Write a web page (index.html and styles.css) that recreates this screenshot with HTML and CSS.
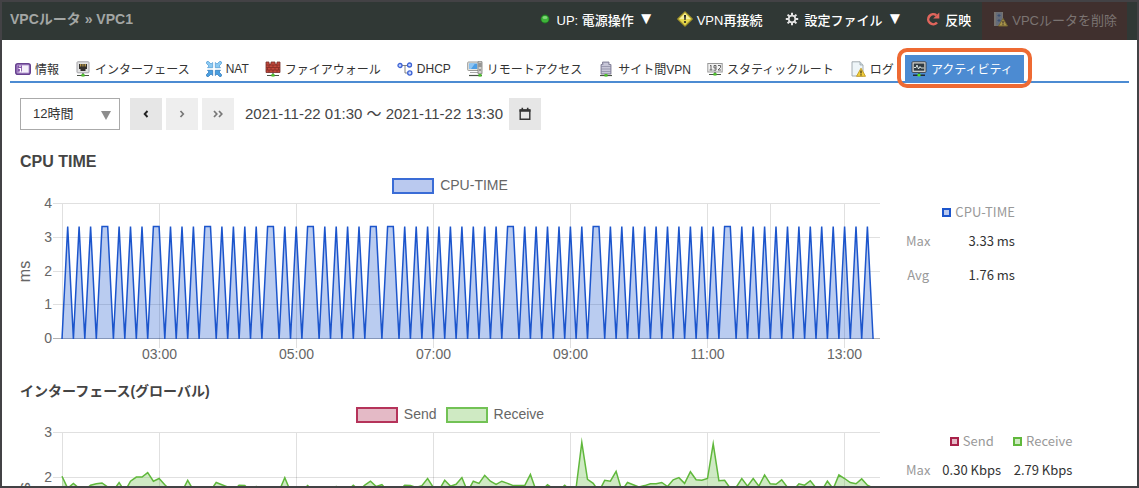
FILE: index.html
```html
<!DOCTYPE html>
<html lang="ja">
<head>
<meta charset="utf-8">
<title>VPCルータ » VPC1</title>
<link rel="stylesheet" href="styles.css">
</head>
<body>
<div class="frame">
  <header class="topbar">
    <h1 class="topbar-title">VPCルータ » VPC1</h1>
    <div class="actions">
      <button class="action" type="button">
        <svg class="icon" viewBox="0 0 16 16"><circle cx="8" cy="8" r="4.4" fill="#1f7a22"/><circle cx="8" cy="8" r="3.6" fill="#3fb33a"/><ellipse cx="8" cy="6.6" rx="2.4" ry="1.5" fill="#7fd678"/></svg>
        <span>UP: 電源操作</span><span class="caret">▼</span>
      </button>
      <button class="action" type="button">
        <svg class="icon" viewBox="0 0 16 16"><path d="M8 .8 15.2 8 8 15.2.8 8Z" fill="#e6d84e" stroke="#a8992b" stroke-width="1.2" stroke-linejoin="round"/><path d="M8 2.3 13.7 8H2.3Z" fill="#f5ef9b"/><path d="M7 4h2l-.4 5H7.400Z" fill="#222"/><circle cx="8" cy="11" r="1.1" fill="#222"/></svg>
        <span>VPN再接続</span>
      </button>
      <button class="action" type="button">
        <svg class="icon" viewBox="0 0 16 16" fill="none" stroke="#e4e4e4"><circle cx="8" cy="8" r="3.300" stroke-width="1.700"/><path d="M8 1.800V4.500M8 11.500V14.200M1.800 8H4.500M11.500 8H14.200M3.600 3.600 5.500 5.500M10.500 10.500 12.400 12.400M3.600 12.400 5.500 10.500M10.500 5.500 12.400 3.600" stroke-width="2"/></svg>
        <span>設定ファイル</span><span class="caret">▼</span>
      </button>
      <button class="action" type="button">
        <svg class="icon" viewBox="0 0 16 16"><path d="M12 11.500A5 5 0 1 1 11.300 4.300" fill="none" stroke="#e0655c" stroke-width="2.600"/><path d="M14.300 1.500V7.600H8.200Z" fill="#e0655c"/></svg>
        <span>反映</span>
      </button>
      <button class="action action-delete" type="button" disabled>
        <svg class="icon" viewBox="0 0 16 16"><path d="M2 1h9v14H2z" fill="#77736f"/><path d="M4 1.500h6v13H4z" fill="#656c78"/><path d="M7 3v3M5.500 4.500h3M7 8v3M5.500 9.500h3" stroke="#3a4e70"/><path d="M11 7.500 15.500 15h-9Z" fill="#a8934a" stroke="#756530"/><path d="M11 10v2.500M11 13.200v1" stroke="#302828"/></svg>
        <span>VPCルータを削除</span>
      </button>
    </div>
  </header>

  <nav class="tabs">
    <a class="tab" href="#info"><svg class="icon" viewBox="0 0 16 16"><rect x=".8" y="2.800" width="14.400" height="10.400" rx="2" fill="#b79bd3" stroke="#67418f" stroke-width="1.600"/><path d="M7 4.500h6.500v7H7z" fill="#f5f0fa"/><path d="M2.500 11.500V4.500H7v7Z" fill="#8455aa"/><path d="M5 4.500v1.500M3.500 7.500H5.500V11M3.500 11h4" stroke="#fff" stroke-width="1.200" fill="none"/></svg><span>情報</span></a>
    <a class="tab" href="#interface"><svg class="icon" viewBox="0 0 16 16"><rect x="2" y=".8" width="12" height="11" rx=".8" fill="#e2e2e2" stroke="#a3a3a8"/><path d="M4 3h8v5h-1.500v2h-5V8H4Z" fill="#33302e"/><path d="M5.500 3v2.500M7.200 3v2.500M8.900 3v2.500M10.500 3v2.500" stroke="#d8b454" stroke-width=".8"/><path d="M2 14.500h12M8 12v2" stroke="#4b5348" stroke-width="1.200"/><rect x="6.500" y="13" width="3" height="2.600" fill="#4ec22d"/></svg><span>インターフェース</span></a>
    <a class="tab" href="#nat"><svg class="icon" viewBox="0 0 16 16"><g fill="#8ccaf2" stroke="#4c98d4" stroke-width=".7"><path id="q" d="M1 .5 2.500 .5 5 3 6.700 1.500V6.700H1.500L3 5 .5 2.500V1Z"/><use href="#q" transform="matrix(-1 0 0 1 16 0)"/></g><g fill="#4a9fe0" stroke="#2a72b8" stroke-width=".7"><path d="M1 15.500H2.500L5 13 6.700 14.500V9.300H1.500L3 11 .5 13.500V15Z"/><path d="M15 15.500H13.500L11 13 9.300 14.500V9.300h5.200L13 11l2.500 2.500V15Z"/></g></svg><span>NAT</span></a>
    <a class="tab" href="#firewall"><svg class="icon" viewBox="0 0 16 16"><path d="M1 1h3v2h2V1h4v2h2V1h3v10.500H1Z" fill="#c4473b" stroke="#75302b" stroke-width=".8"/><path d="M1 4h14M1 6.500h14M1 9h14M4 4v2.500M8 4v2.500M12 4v2.500M2.500 6.500V9M6 6.500V9M10 6.500V9M13.500 6.500V9M4 9v2.500M8 9v2.500M12 9v2.500" stroke="#7c2b25" stroke-width=".7"/><path d="M2 14.500h12M8 12v2" stroke="#4b5348" stroke-width="1.200"/><rect x="6.500" y="13" width="3" height="2.600" fill="#4ec22d"/></svg><span>ファイアウォール</span></a>
    <a class="tab" href="#dhcp"><svg class="icon" viewBox="0 0 16 16"><path d="M4 4.500h8M8 4.500V12h4" fill="none" stroke="#777" stroke-width=".9"/><g fill="#c7d6ff" stroke="#3c62d4" stroke-width="1.300"><circle cx="3" cy="4.500" r="2"/><circle cx="12.500" cy="4" r="2"/><circle cx="12.800" cy="12" r="2.100"/></g></svg><span>DHCP</span></a>
    <a class="tab" href="#remote"><svg class="icon" viewBox="0 0 16 16"><rect x=".7" y="1" width="11.300" height="8.500" rx=".7" fill="#e7e7e2" stroke="#9b9b98"/><rect x="2.300" y="2.500" width="8" height="5.500" fill="#4c9ee5"/><path d="M2.300 2.500H8L4 8H2.300Z" fill="#8ec5f3"/><path d="M3 11h8v1H3z" fill="#aaa"/><path d="M11 .7h4v12h-4z" fill="#d2d2cf" stroke="#797976" stroke-width=".8"/><path d="M11.500 3h3M11.500 5h3M12 9h2" stroke="#5b5b5b"/><path d="M2 14.500h13" stroke="#4b5348" stroke-width="1.200"/><rect x="11.500" y="13" width="3" height="2.600" fill="#4ec22d"/></svg><span>リモートアクセス</span></a>
    <a class="tab" href="#vpn"><svg class="icon" viewBox="0 0 16 16"><path d="M3 13V3.500H4.500V1H11v2.500h2V13Z" fill="#b3b2c7" stroke="#77758e" stroke-width=".8"/><path d="M5 4v8M7 2v10M9 2v10M11 4v8" stroke="#e7e6f1" stroke-width=".8"/><path d="M3 5.500h10M3 8h10M3 10.500h10" stroke="#88869f" stroke-width=".7"/><path d="M2 14.500h12" stroke="#4b5348" stroke-width="1.200"/><rect x="6.500" y="13" width="3" height="2.600" fill="#4ec22d"/></svg><span>サイト間VPN</span></a>
    <a class="tab" href="#route"><svg class="icon" viewBox="0 0 16 16"><rect x=".8" y="2.500" width="14.400" height="8.500" fill="#f2f2f2" stroke="#999"/><path d="M3 5l1-.8V9M2.500 9h3M9 9.200V4.500H7V7h2M6.500 9.200H9M11 4.500h2.500V6.500L11 9h3" fill="none" stroke="#555" stroke-width=".9"/><path d="M2 13.500h12M8 11v2" stroke="#4b5348" stroke-width="1.200"/><rect x="6.500" y="12" width="3" height="2.600" fill="#4ec22d"/></svg><span>スタティックルート</span></a>
    <a class="tab" href="#log"><svg class="icon" viewBox="0 0 16 16"><path d="M2 .8h8L13 4v11H2Z" fill="#eef5f8" stroke="#9aa4a9" stroke-width=".9"/><path d="M10 .8V4h3" fill="#cdd9df" stroke="#9aa4a9" stroke-width=".8"/><path d="M11 7.200 15.500 15.300h-9Z" fill="#f2cf3e" stroke="#c19b25" stroke-width=".9" stroke-linejoin="round"/><path d="M11 9.500v3M11 13.200v1.200" stroke="#392f15" stroke-width="1.200"/></svg><span>ログ</span></a>
    <a class="tab tab-active" href="#activity"><svg class="icon" viewBox="0 0 16 16"><rect x="1" y=".8" width="14" height="10.600" rx=".8" fill="#d8d8d3" stroke="#33383d" stroke-width=".9"/><rect x="2.700" y="2.500" width="10.600" height="7.200" fill="#303b42"/><path d="M3 6.500h2L6 4l1.500 4L9 5.500 10 7h3" fill="none" stroke="#e6f2ee" stroke-width=".9"/><path d="M2 14.300h12M8 12v2" stroke="#222b32" stroke-width="1.400"/><rect x="6.500" y="12.800" width="3" height="2.600" fill="#4ee32d"/></svg><span>アクティビティ</span></a>
  </nav>

  <main class="content">
    <form class="controls">
      <label class="period">
        <select class="period-select" aria-label="期間"><option>12時間</option></select>
      </label>
      <button class="pager" type="button" aria-label="前へ"><svg class="icon" viewBox="0 0 16 16"><path d="M9.500 5 6.700 8l2.800 3" fill="none" stroke="#222" stroke-width="1.900"/></svg></button>
      <button class="pager pager-off" type="button" aria-label="次へ" disabled><svg class="icon" viewBox="0 0 16 16"><path d="M6.500 5 9.300 8l-2.800 3" fill="none" stroke="#777" stroke-width="1.700"/></svg></button>
      <button class="pager pager-off" type="button" aria-label="最新" disabled><svg class="icon" viewBox="0 0 16 16"><path d="M4 5 6.800 8 4 11M9 5l2.800 3L9 11" fill="none" stroke="#777" stroke-width="1.700"/></svg></button>
      <span class="range">2021-11-22 01:30 〜 2021-11-22 13:30</span>
      <button class="pager" type="button" aria-label="日付を選択"><svg class="icon" viewBox="0 0 16 16"><path d="M3.200 4h9.600v9.300H3.200Z" fill="none" stroke="#333" stroke-width="1.400"/><path d="M2.500 3.500h11v2.200h-11zM4.500 1.800h1.600v2H4.500zM9.900 1.800h1.600v2H9.900z" fill="#333"/></svg></button>
    </form>

    <section class="panel">
      <h2 class="panel-title">CPU TIME</h2>
      <div class="panel-body">
        <div class="chart">
          <div class="legend"><span class="legend-item"><i class="legend-box blue"></i>CPU-TIME</span></div>
          <svg class="plot" id="cpu-chart"></svg>
        </div>
        <table class="stats">
          <tr><td></td><th scope="col"><i class="swatch blue"></i>CPU-TIME</th></tr>
          <tr><th scope="row">Max</th><td>3.33 ms</td></tr>
          <tr><th scope="row">Avg</th><td>1.76 ms</td></tr>
        </table>
      </div>
    </section>

    <section class="panel">
      <h2 class="panel-title panel-title-ja">インターフェース(グローバル)</h2>
      <div class="panel-body">
        <div class="chart">
          <div class="legend"><span class="legend-item"><i class="legend-box red"></i>Send</span><span class="legend-item"><i class="legend-box green"></i>Receive</span></div>
          <svg class="plot" id="traffic-chart"></svg>
        </div>
        <table class="stats">
          <tr><td></td><th scope="col"><i class="swatch red"></i>Send</th><th scope="col"><i class="swatch green"></i>Receive</th></tr>
          <tr><th scope="row">Max</th><td>0.30 Kbps</td><td>2.79 Kbps</td></tr>
        </table>
      </div>
    </section>
  </main>
</div>
<script src="charts.js"></script>
</body>
</html>
```

FILE: styles.css
```css
* { box-sizing: border-box; }

body {
  margin: 0;
  font-family: "Liberation Sans", "Noto Sans CJK JP", sans-serif;
  font-size: 13px;
  color: #333;
  background: #fff;
}

button, select { font: inherit; margin: 0; }

.frame {
  height: 100vh;
  overflow: hidden;
  border: 2px solid #434245;
}

.icon { width: 16px; height: 16px; flex: none; display: block; }

/* Header */
.topbar {
  display: flex;
  justify-content: space-between;
  height: 38px;
  padding: 0 10px 0 8px;
  background: #303835;
}
.topbar-title {
  margin: 0;
  font-size: 14px;
  line-height: 34px;
  font-weight: bold;
  color: #a3a6a4;
  white-space: nowrap;
}
.actions { display: flex; white-space: nowrap; }
.action {
  display: flex;
  align-items: center;
  gap: 4px;
  padding: 0 11px 4px;
  border: 0;
  background: none;
  color: #fff;
  font-weight: 500;
}
.caret { font-size: 17px; line-height: 16px; }
.action-delete {
  padding: 0 10px 4px 10px;
  background: #40302e;
  color: #7b7472;
  font-weight: 400;
}

/* Tabs */
.tabs {
  display: flex;
  gap: 6px;
  margin: 15px 8px 0;
  border-bottom: 2px solid #4c8bd2;
  font-size: 12px;
  white-space: nowrap;
}
.tab {
  display: flex;
  align-items: center;
  gap: 4px;
  height: 26px;
  padding: 1px 5px 0;
  color: #333;
  text-decoration: none;
}
.tab-active {
  position: relative;
  padding: 1px 11px 0 6px;
  background: #4c8bd2;
  color: #fff;
}
.tab-active::after {
  content: "";
  position: absolute;
  inset: -7px -8px;
  border: 4px solid #ee6a33;
  border-radius: 10px;
}

/* Period controls */
.content { padding: 15px 10px 0 18px; }
.controls { display: flex; align-items: center; height: 32px; gap: 4px; }
.period { position: relative; width: 100px; margin-right: 6px; }
.period::after {
  content: "";
  position: absolute;
  right: 9px;
  top: 13px;
  border: 5px solid transparent;
  border-top: 9px solid #8d8d8d;
  border-bottom: 0;
  pointer-events: none;
}
.period-select {
  display: block;
  appearance: none;
  width: 100%;
  height: 32px;
  padding: 0 12px 2px;
  border: 1px solid #aaa;
  border-radius: 0;
  background: #fff;
  color: #333;
}
.pager {
  display: grid;
  place-items: center;
  width: 32px;
  height: 32px;
  padding: 0;
  border: 0;
  background: #e6e6e6;
}
.pager-off { background: #eee; }
.range { margin: 0 2px 0 7px; font-size: 15px; line-height: 20px; white-space: nowrap; color: #444; }

/* Chart panels */
.panel-title {
  margin: 0;
  padding-top: 20px;
  font-size: 16px;
  line-height: 24px;
  color: #444;
}
.panel-title-ja { font-size: 14px; }
.panel-body { display: flex; gap: 20px; }
.chart { flex: 1; min-width: 0; padding-top: 4px; }
.legend {
  display: flex;
  justify-content: center;
  gap: 9px;
  height: 16px;
  font-size: 14px;
  line-height: 15px;
  color: #666;
}
.legend-item { display: flex; gap: 6px; }
.legend-box { width: 42px; height: 16px; border: 2px solid; }
.blue { border-color: #3a6cd6; background: #bac9ef; }
.red { border-color: #b5335a; background: #e4bac6; }
.green { border-color: #72c255; background: #cfeac3; }
.plot { display: block; width: 100%; height: 165px; overflow: visible; }
.plot text { font-size: 14px; fill: #666; }
.plot .axis-title { font-size: 16px; }
.plot .grid { stroke: #000; stroke-opacity: 0.12; }
.plot .zero { stroke: #000; stroke-opacity: 0.3; }
.plot .series { stroke-width: 1.5; stroke-miterlimit: 10; fill: none; }
.plot .cpu { stroke: #1c55cc; }
.plot .cpu-area { fill: #1c55cc; fill-opacity: 0.3; }
.plot .receive { stroke: #60b83c; }
.plot .receive-area { fill: #60b83c; fill-opacity: 0.3; }

/* Statistics */
.stats {
  flex: 0 0 227px;
  align-self: flex-start;
  display: block;
  margin-top: 29px;
  border-collapse: collapse;
  font-family: "Noto Sans CJK JP", sans-serif;
  line-height: 18px;
}
.stats th { font-weight: 400; color: #999; white-space: nowrap; }
.stats th, .stats td { padding: 8px 6px; }
.stats tr:first-child th { padding: 0 6px 3px; }
.stats tr:first-child td { padding: 0; }
.stats td { text-align: right; white-space: nowrap; }
.swatch {
  display: inline-block;
  width: 9px;
  height: 9px;
  margin-right: 4px;
  border: 2px solid;
}
.swatch.blue { border-color: #1c55cc; }
.swatch.red { border-color: #a8224a; }
.swatch.green { border-color: #60b83c; }
```

FILE: charts.js
```js
// Samples are taken every five minutes, starting at 01:35.
const SPAN = 143.2;
const LEFT = 42;
const TOP = 10;
const HEIGHT = 135;

// CPU time alternates between 0 and 3.33 ms; a few peaks last two samples.
const wide = new Set([7, 16, 25, 36, 43, 54, 57, 78, 93, 116]);
const cpu = new Array(143).fill(0);
for (let i = 1; i < 142; i += 2) {
  cpu[i] = 3.33;
  if (wide.has(i)) {
    cpu[i + 1] = 3.33;
    i += 1;
  }
}

const receive = [
  2.04, 1.77, 1.88, 1.77, 1.73, 1.84, 1.87, 1.89, 1.80, 1.72, 1.90, 1.70,
  1.93, 2.02, 2.02, 2.12, 1.93, 1.99, 1.85, 1.72, 1.70, 1.70, 1.95, 1.73,
  1.72, 1.70, 1.72, 1.90, 1.85, 1.80, 1.72, 1.84, 1.83, 1.72, 1.81, 1.72,
  1.70, 1.70, 1.71, 2.01, 1.70, 1.70, 1.70, 1.83, 1.72, 1.72, 1.70, 1.72,
  1.81, 1.72, 1.72, 1.84, 1.73, 1.84, 1.93, 1.81, 1.85, 1.72, 1.70, 1.72,
  1.84, 1.83, 1.79, 1.83, 1.99, 1.79, 1.73, 1.95, 1.82, 1.86, 2.01, 1.70,
  1.93, 1.88, 2.06, 1.93, 1.86, 1.93, 1.88, 1.83, 1.83, 1.83, 2.08, 1.72,
  1.72, 1.85, 1.76, 1.72, 1.84, 1.72, 1.78, 2.79, 1.97, 1.88, 1.70, 1.95,
  1.93, 2.15, 1.72, 1.90, 1.85, 1.80, 1.83, 1.87, 1.87, 1.90, 1.81, 1.96,
  2.01, 1.88, 2.14, 1.96, 1.95, 1.99, 2.76, 1.94, 1.95, 1.77, 1.79, 1.99,
  1.82, 1.99, 1.82, 2.07, 1.87, 1.86, 1.96, 1.79, 1.72, 1.87, 1.84, 1.94,
  1.78, 1.72, 1.93, 1.76, 2.07, 1.99, 1.90, 1.87, 1.98, 1.84, 1.78
];

function draw(id, options) {
  const svg = document.getElementById(id);
  const width = svg.getBoundingClientRect().width;
  const x = i => LEFT + (i / SPAN) * (width - LEFT);
  const y = v => TOP + HEIGHT * (1 - v / options.max);
  const crisp = v => Math.floor(v) + 0.5;
  const line = (cls, x1, y1, x2, y2) =>
    `<line class="${cls}" x1="${x1}" y1="${y1}" x2="${x2}" y2="${y2}"/>`;
  const bottom = TOP + HEIGHT;
  let out = "";

  for (let v = 0; v <= options.max; v += 1) {
    const gy = crisp(y(v) - 0.5);
    out += line(v ? "grid" : "zero", LEFT - 9, gy, width, gy);
    out += `<text x="${LEFT - 10}" y="${gy + 4}" text-anchor="end">${v}</text>`;
  }
  out += line("grid", LEFT + 0.5, TOP, LEFT + 0.5, bottom);
  for (let i = 17, hour = 3; hour <= 13; i += 24, hour += 2) {
    const gx = crisp(x(i));
    out += line("grid", gx, TOP, gx, bottom + 9);
    out += `<text x="${gx}" y="${bottom + 20}" text-anchor="middle">${String(hour).padStart(2, "0")}:00</text>`;
  }
  if (options.mark) {
    const gx = crisp(x(options.mark));
    out += line("grid", gx, TOP, gx, bottom);
  }

  const points = options.data.map((v, i) => `${x(i).toFixed(1)},${y(v).toFixed(1)}`).join(" ");
  out += `<polygon class="${options.cls}-area" points="${x(0)},${bottom} ${points} ${x(options.data.length - 1)},${bottom}"/>`;
  out += `<polyline class="series ${options.cls}" points="${points}"/>`;
  out += `<text class="axis-title" transform="translate(10 ${TOP + HEIGHT / 2}) rotate(-90)" text-anchor="middle">${options.unit}</text>`;
  svg.innerHTML = out;
}

function drawAll() {
  draw("cpu-chart", { data: cpu, max: 4, unit: "ms", cls: "cpu", mark: 124 });
  draw("traffic-chart", { data: receive, max: 3, unit: "Kbps", cls: "receive" });
}

window.addEventListener("resize", drawAll);
drawAll();
```
